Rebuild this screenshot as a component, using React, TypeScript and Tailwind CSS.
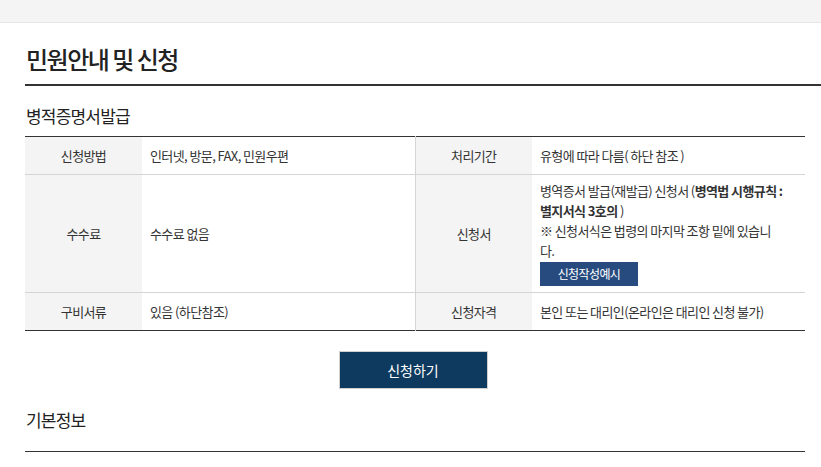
const font = { fontFamily: '"Noto Sans CJK KR", "Noto Sans", sans-serif' };

type Row = { label: string; value: React.ReactNode; label2: string; value2: React.ReactNode; h: string };

const th = "bg-[#f4f4f4] text-center align-middle font-normal text-[#333] px-2";
const td = "text-left align-middle text-[#333] px-2";

export default function App() {
  const rows: Row[] = [
    {
      label: "신청방법",
      value: "인터넷, 방문, FAX, 민원우편",
      label2: "처리기간",
      value2: "유형에 따라 다름( 하단 참조 )",
      h: "h-[38px]",
    },
    {
      label: "수수료",
      value: "수수료 없음",
      label2: "신청서",
      value2: (
        <div className="py-[6px]">
          <p>
            병역증서 발급(재발급) 신청서 (<b>병역법 시행규칙 :</b>
            <br />
            <b>별지서식 3호의</b> )
          </p>
          <p>
            ※ 신청서식은 법령의 마지막 조항 밑에 있습니
            <br />
            다.
          </p>
          <button className="mt-[1px] h-[24px] w-[98px] bg-[#284b7f] text-[12px] text-white">
            신청작성예시
          </button>
        </div>
      ),
      h: "h-[116px]",
    },
    {
      label: "구비서류",
      value: "있음 (하단참조)",
      label2: "신청자격",
      value2: "본인 또는 대리인(온라인은 대리인 신청 불가)",
      h: "h-[38px]",
    },
  ];

  return (
    <div className="min-h-[467px] bg-white text-[#222]" style={font}>
      <div className="h-[23px] border-b border-[#e6e6e6] bg-[#f5f4f5]" />
      <div className="pl-[25px]">
        <h1 className="border-b-2 border-[#333] pt-[19px] pb-[9px] pl-px text-[24px] leading-[33px] font-medium tracking-[-1.5px] text-[#222]">
          민원안내 및 신청
        </h1>
        <div className="pr-[16px]">
          <h2 className="pt-[18px] pb-[9px] pl-px text-[17px] leading-[23px] tracking-[-0.8px] text-[#222]">
            병적증명서발급
          </h2>
          <table className="w-full table-fixed border-collapse border-t border-b border-[#333] text-[13px] leading-[20px] tracking-[-0.6px]">
            <colgroup>
              <col className="w-[117px]" />
              <col className="w-[273px]" />
              <col className="w-[117px]" />
              <col className="w-[273px]" />
            </colgroup>
            <tbody>
              {rows.map((r, i) => (
                <tr key={i} className={`${r.h} ${i < rows.length - 1 ? "border-b border-[#d5d5d5]" : ""}`}>
                  <th className={th}>{r.label}</th>
                  <td className={td}>{r.value}</td>
                  <th className={`${th} border-l border-[#d5d5d5]`}>{r.label2}</th>
                  <td className={td}>{r.value2}</td>
                </tr>
              ))}
            </tbody>
          </table>
          <div className="flex justify-center pt-[20px]">
            <button className="ml-[-4px] h-[38px] w-[149px] border border-[#d0d0d0] bg-[#0e3a5f] text-[14px] text-white">
              신청하기
            </button>
          </div>
          <h2 className="border-b border-[#333] pt-[18px] pb-[18px] pl-px text-[17px] leading-[26px] tracking-[-0.8px] text-[#222]">
            기본정보
          </h2>
        </div>
      </div>
    </div>
  );
}
